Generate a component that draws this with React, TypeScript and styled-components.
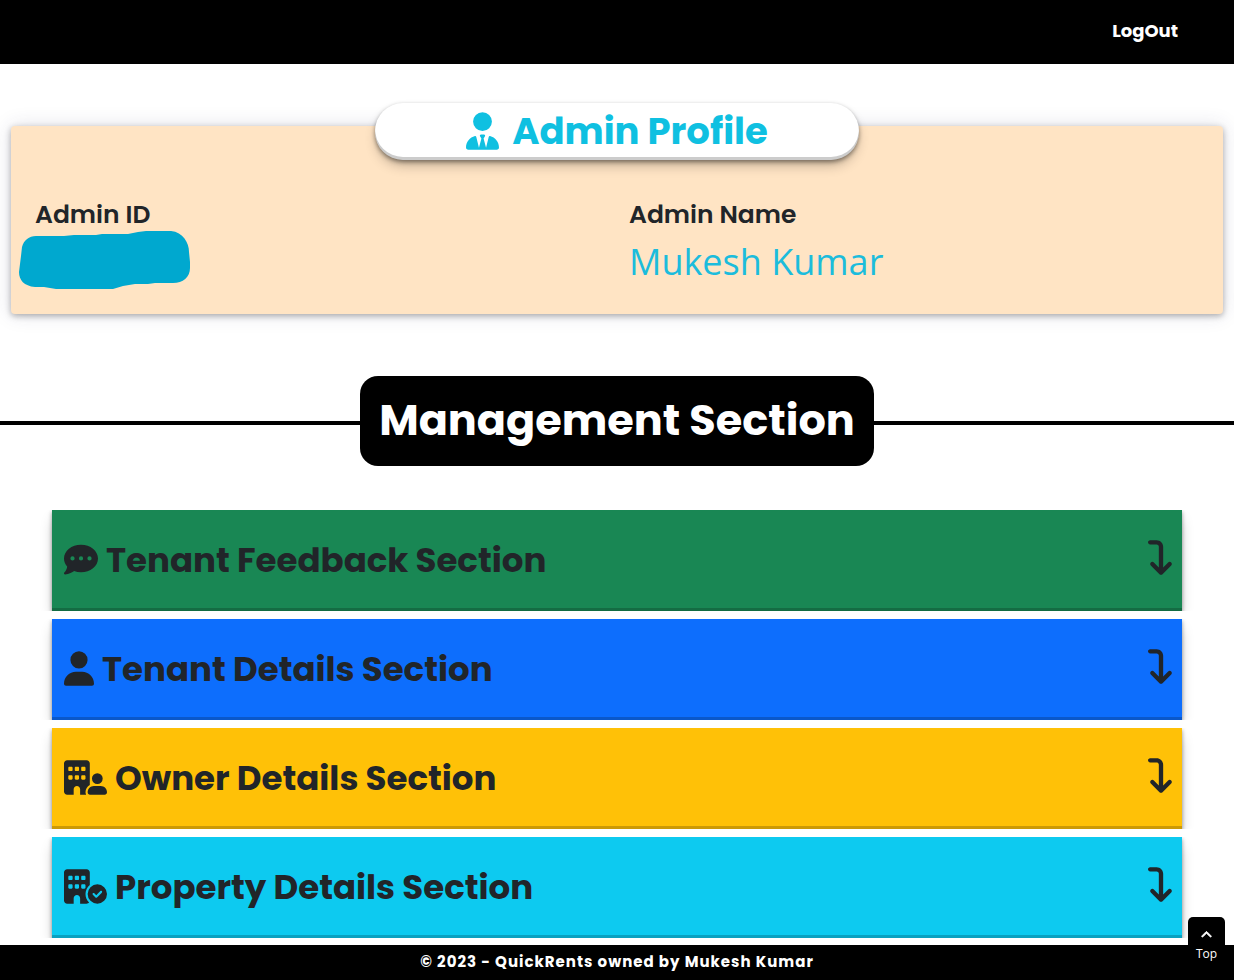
import React from "react";
import styled, { createGlobalStyle } from "styled-components";
import {
  FaArrowTurnDown,
  FaBuildingCircleCheck,
  FaBuildingUser,
  FaChevronUp,
  FaCommentDots,
  FaUser,
  FaUserTie,
} from "react-icons/fa6";

const GlobalStyle = createGlobalStyle`
  * { box-sizing: border-box; }
  body {
    margin: 0;
    background: #fff;
    color: #212529;
    font-family: Poppins, Inter, sans-serif;
  }
  h1, h2, h3, p, dl, dt, dd { margin: 0; }
`;

const raised =
  "rgba(0,0,0,0.4) 0 2px 4px, rgba(0,0,0,0.3) 0 7px 13px -3px, rgba(0,0,0,0.2) 0 -3px 0 inset";

const Page = styled.div`
  display: flex;
  flex-direction: column;
  min-height: 100vh;
`;

const Navbar = styled.header`
  display: flex;
  align-items: center;
  justify-content: flex-end;
  height: 64px;
  padding: 0 56px 2px;
  background: #000;
`;

const LogOut = styled.a`
  color: #fff;
  font-size: 18px;
  font-weight: 700;
  line-height: 24px;
  text-decoration: none;
`;

const Main = styled.main`
  display: flex;
  flex-direction: column;
`;

const ProfileCard = styled.section`
  display: flex;
  flex-direction: column;
  align-items: center;
  margin: 62px 11px 0;
  padding-bottom: 28px;
  border-radius: 4px;
  background: #ffe4c4;
  box-shadow: rgba(50, 50, 93, 0.15) 0 0 20px, rgba(0, 0, 0, 0.3) 0 2px 6px;
`;

const ProfileTitle = styled.h2`
  display: flex;
  align-items: center;
  justify-content: center;
  gap: 13px;
  width: 40%;
  height: 57px;
  margin-top: -23px;
  padding-bottom: 2px;
  border-radius: 28px;
  background: #fff;
  box-shadow: ${raised};
  color: #0fc0e1;
  font-size: 37px;
  font-weight: 700;
  line-height: 48px;
  svg {
    width: 33px;
    height: 38px;
  }
`;

const ProfileFields = styled.dl`
  display: grid;
  grid-template-columns: 1fr 1fr;
  width: 100%;
  margin-top: 39px;
  padding-left: 24px;
`;

const Field = styled.div`
  position: relative;
`;

const FieldLabel = styled.dt`
  font-size: 25px;
  font-weight: 600;
  line-height: 32px;
`;

const FieldValue = styled.dd`
  height: 55px;
  color: #1cbcdc;
  font-family: "Segoe UI", "Open Sans", sans-serif;
  font-size: 36px;
  font-weight: 500;
  line-height: 62px;
`;

const Redaction = styled.svg`
  position: absolute;
  left: -17px;
  top: 31px;
`;

const SectionHeading = styled.div`
  display: flex;
  align-items: center;
  margin-top: 62px;
  &::before,
  &::after {
    content: "";
    flex: 1;
    height: 4px;
    margin-top: 3px;
    background: #000;
  }
`;

const HeadingBox = styled.h1`
  display: flex;
  justify-content: center;
  width: 514px;
  max-width: 100%;
  padding: 16px 0 18px;
  border-radius: 18px;
  background: #000;
  color: #fff;
  font-size: 43px;
  font-weight: 700;
  line-height: 56px;
  white-space: nowrap;
`;

const SectionList = styled.div`
  display: flex;
  flex-direction: column;
  gap: 8px;
  padding: 44px 52px 7px;
`;

const SectionItem = styled.h3`
  overflow-x: visible;
  overflow-y: clip;
`;

const SectionButton = styled.button<{ $color: string; $iconWidth: number }>`
  display: flex;
  align-items: center;
  gap: 8px;
  width: 100%;
  height: 101px;
  padding: 0 8px 2px 12px;
  border: 0;
  background: ${(p) => p.$color};
  box-shadow: ${raised};
  color: #212529;
  font-family: inherit;
  font-size: 34px;
  font-weight: 700;
  line-height: 48px;
  text-align: left;
  cursor: pointer;
  svg {
    height: 35px;
  }
  svg:first-child {
    width: ${(p) => p.$iconWidth}px;
  }
  svg:last-child {
    width: 26px;
    margin-bottom: 4px;
  }
`;

const SectionName = styled.span`
  flex: 1;
`;

const Footer = styled.footer`
  margin-top: auto;
  padding: 5px 0 6px;
  background: #000;
  color: #fff;
  font-size: 15px;
  font-weight: 700;
  letter-spacing: 1px;
  line-height: 24px;
  text-align: center;
`;

const TopButton = styled.button`
  position: fixed;
  right: 9px;
  bottom: 15px;
  display: flex;
  flex-direction: column;
  align-items: center;
  gap: 5px;
  width: 37px;
  height: 48px;
  padding: 12px 0 0;
  border: 0;
  border-radius: 5px;
  background: #000;
  color: #fff;
  font-family: "Segoe UI", "Open Sans", sans-serif;
  font-size: 12px;
  line-height: 16px;
  cursor: pointer;
  svg {
    width: 11px;
    stroke-width: 40px;
  }
`;

const sections = [
  { name: "Tenant Feedback Section", color: "#198754", Icon: FaCommentDots, iconWidth: 34 },
  { name: "Tenant Details Section", color: "#0d6efd", Icon: FaUser, iconWidth: 30 },
  { name: "Owner Details Section", color: "#ffc107", Icon: FaBuildingUser, iconWidth: 43 },
  { name: "Property Details Section", color: "#0dcaf0", Icon: FaBuildingCircleCheck, iconWidth: 43 },
];

export default function App() {
  return (
    <Page>
      <GlobalStyle />
      <Navbar>
        <LogOut href="#logout">LogOut</LogOut>
      </Navbar>
      <Main>
        <ProfileCard>
          <ProfileTitle>
            <FaUserTie aria-hidden />
            Admin Profile
          </ProfileTitle>
          <ProfileFields>
            <Field>
              <FieldLabel>Admin ID</FieldLabel>
              <FieldValue>
                <Redaction width="173" height="60" viewBox="0 0 173 60" aria-hidden>
                  <path
                    d="M18 6 L46 6 L56 5 L78 5 L84 4 L110 4 L120 2 L128 1 L153 1 C165 2 171 13 171 22 L172 32 L172 38 C172 47 165 53 155 53 L137 53 L130 54 L117 54 L105 56 L95 59 L38 59 L26 57 L17 57 C6 56 1 50 1 42 L3 26 L4 17 C6 10 11 6 18 6 Z"
                    fill="#00a8cf"
                  />
                </Redaction>
              </FieldValue>
            </Field>
            <Field>
              <FieldLabel>Admin Name</FieldLabel>
              <FieldValue>Mukesh Kumar</FieldValue>
            </Field>
          </ProfileFields>
        </ProfileCard>
        <SectionHeading>
          <HeadingBox>Management Section</HeadingBox>
        </SectionHeading>
        <SectionList>
          {sections.map(({ name, color, Icon, iconWidth }) => (
            <SectionItem key={name}>
              <SectionButton type="button" $color={color} $iconWidth={iconWidth}>
                <Icon aria-hidden />
                <SectionName>{name}</SectionName>
                <FaArrowTurnDown aria-hidden />
              </SectionButton>
            </SectionItem>
          ))}
        </SectionList>
      </Main>
      <Footer>© 2023 - QuickRents owned by Mukesh Kumar</Footer>
      <TopButton type="button">
        <FaChevronUp aria-hidden />
        Top
      </TopButton>
    </Page>
  );
}
